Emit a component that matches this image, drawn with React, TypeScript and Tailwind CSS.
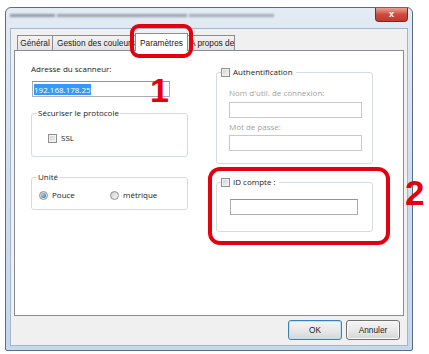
const ui = "font-['Open_Sans','Noto_Sans',sans-serif] text-[8px] leading-[12px] text-[#1b1b1b]";
const sys = "font-['Liberation_Sans',Arial,sans-serif] text-[8.3px] text-[#1b1b1b]";

const tabs = [
  { label: "Général", w: "w-[36px]", cls: "" },
  { label: "Gestion des couleurs", w: "w-[85px]", cls: "-ml-px justify-start pl-[4px]" },
  { label: "Paramètres", w: "w-[53px]", cls: "", active: true },
  { label: "A propos de", w: "w-[49px]", cls: "justify-start pl-[3px]" },
];

function CheckBox() {
  return (
    <span className="inline-block w-[9px] h-[9px] shrink-0 border border-[#8e8f8f] bg-linear-to-br from-[#cdcdcd] to-[#f7f7f7] shadow-[inset_0_0_0_1px_#f2f2f2]" />
  );
}

function Radio({ on }: { on?: boolean }) {
  return (
    <span className="flex items-center justify-center w-[9px] h-[9px] shrink-0 rounded-full border border-[#8e8f8f] bg-linear-to-br from-[#cfcfcf] to-[#f8f8f8]">
      {on && <span className="w-[5px] h-[5px] rounded-full bg-[radial-gradient(circle_at_35%_35%,#a8d8f8,#1d5c9b)]" />}
    </span>
  );
}

function TextBox({ className, disabled, children }: { className: string; disabled?: boolean; children?: React.ReactNode }) {
  return (
    <div
      className={
        "h-[16px] bg-white border flex items-center px-[1px] " +
        (disabled ? "border-[#c9c9c9] " : "border-[#abadb3] border-t-[#8f939b] ") +
        className
      }
    >
      {children}
    </div>
  );
}

function Button({ label, main }: { label: string; main?: boolean }) {
  return (
    <div
      className={
        "w-[54px] h-[20px] rounded-[3px] border flex items-center justify-center bg-linear-to-b from-[#f4f4f4] via-[#e9e9e9] to-[#d6d6d6] " +
        sys +
        (main ? " border-[#3c7fb1] shadow-[inset_0_0_0_1px_#b8e3f7]" : " border-[#707070] shadow-[inset_0_0_0_1px_#fbfbfb]")
      }
    >
      {label}
    </div>
  );
}

export default function App() {
  return (
    <div className="relative w-[429px] h-[354px] bg-white overflow-hidden pt-[7px] pl-[5px]">
      {/* window */}
      <div className="w-[408px] h-[344px] border border-[#5a6d84] rounded-t-[6px] rounded-b-[2px] bg-linear-to-b from-[#e3ebf4] via-[#cfdeef] to-[#c4d8ee] flex flex-col px-[4px] pb-[4px]">
        <div className="h-[20px] flex items-start justify-between shrink-0">
          <div className="mt-[6px] flex items-center gap-[2px] blur-[1.2px] opacity-70">
            <div className="w-[45px] h-[3px] bg-[#6e7680]" />
            <div className="w-[130px] h-[3px] bg-[#7c838c]" />
            <div className="w-[85px] h-[3px] bg-[#8a9098]" />
          </div>
          <div className="w-[33px] h-[14px] rounded-b-[4px] border border-t-0 border-[#7a2a22] bg-linear-to-b from-[#e8a093] via-[#cf4a3d] to-[#c0392b] flex items-center justify-center text-white text-[9px] font-bold font-['Liberation_Sans',sans-serif] leading-none">
            x
          </div>
        </div>

        {/* client area */}
        <div className="flex-1 bg-[#f0f0f0] border border-[#a6b6c8] flex flex-col px-[3px] pt-[4px]">
          <div className="flex items-end h-[17px] ml-[3px]">
            {tabs.map((t, i) =>
              t.active ? (
                <div
                  key={i}
                  className={`relative z-10 -mx-[2px] -mb-px h-[18px] ${t.w} bg-white border border-b-0 border-[#898c95] flex justify-center pt-[3px] leading-[12px] ${sys}`}
                >
                  {t.label}
                </div>
              ) : (
                <div
                  key={i}
                  className={`h-[15px] ${t.w} ${t.cls} overflow-hidden whitespace-nowrap border border-b-0 border-[#898c95] bg-linear-to-b from-[#f3f3f3] to-[#e3e3e3] flex items-center justify-center ${sys}`}
                >
                  {t.label}
                </div>
              )
            )}
          </div>

          {/* tab page */}
          <div className={`h-[266px] bg-white border border-[#898c95] flex pl-[16px] gap-[28px] ${ui}`}>
            <div className="w-[157px] flex flex-col pt-[12px]">
              <div>Adresse du scanneur:</div>
              <TextBox className="mt-[6px] ml-[1px] w-[138px]">
                <span className="bg-[#3399ff] text-white leading-[11px]">192.168.178.25</span>
              </TextBox>

              <fieldset className="mt-[10px] h-[50px] border border-[#d5dbe1] rounded-[3px] min-w-0">
                <legend className="ml-[5px] px-[1px]">Sécuriser le protocole</legend>
                <div className="flex items-center gap-[4px] pl-[16px] mt-[13px]">
                  <CheckBox />
                  <span>SSL</span>
                </div>
              </fieldset>

              <fieldset className="mt-[14px] h-[39px] border border-[#d5dbe1] rounded-[3px] min-w-0">
                <legend className="ml-[5px] px-[1px]">Unité</legend>
                <div className="flex items-center pl-[7px] mt-[6px]">
                  <div className="w-[71px] flex items-center gap-[4px]">
                    <Radio on />
                    <span>Pouce</span>
                  </div>
                  <div className="flex items-center gap-[4px]">
                    <Radio />
                    <span>métrique</span>
                  </div>
                </div>
              </fieldset>
            </div>

            <div className="w-[157px] flex flex-col pt-[15px]">
              <fieldset className="h-[98px] border border-[#d5dbe1] rounded-[3px] min-w-0">
                <legend className="ml-[4px] pr-[3px]">
                  <span className="flex items-center gap-[3px]">
                    <CheckBox />
                    <span>Authentification</span>
                  </span>
                </legend>
                <div className="flex flex-col pl-[12px] text-[#a3a3a3]">
                  <div className="mt-[9px]">Nom d'util. de connexion:</div>
                  <TextBox disabled className="mt-[3px] w-[133px]" />
                  <div className="mt-[3px]">Mot de passe:</div>
                  <TextBox disabled className="mt-[2px] w-[133px]" />
                </div>
              </fieldset>

              <fieldset className="mt-[12px] h-[56px] border border-[#d5dbe1] rounded-[3px] min-w-0">
                <legend className="ml-[4px] pr-[3px]">
                  <span className="flex items-center gap-[3px]">
                    <CheckBox />
                    <span>ID compte :</span>
                  </span>
                </legend>
                <div className="pl-[13px]">
                  <TextBox className="mt-[11px] w-[128px]" />
                </div>
              </fieldset>
            </div>
          </div>

          <div className="flex justify-end gap-[4px] pr-[4px] mt-[4px]">
            <Button label="OK" main />
            <Button label="Annuler" />
          </div>
        </div>
      </div>

      {/* annotations */}
      <div className="absolute left-[130px] top-[24px] w-[63px] h-[34px] border-[4px] border-[#e5000d] rounded-[9px]" />
      <div className="absolute left-[150px] top-[73px] text-[34px] leading-none font-bold text-[#e5000d] font-['Liberation_Sans',Arial,sans-serif]">
        1
      </div>
      <div className="absolute left-[208px] top-[167px] w-[182px] h-[78px] border-[4px] border-[#e5000d] rounded-[12px]" />
      <div className="absolute left-[405px] top-[175px] text-[35px] leading-none font-bold text-[#e5000d] font-['Liberation_Sans',Arial,sans-serif]">
        2
      </div>
    </div>
  );
}
